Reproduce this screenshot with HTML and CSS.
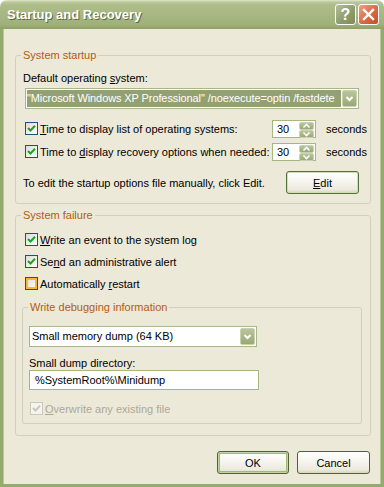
FILE: index.html
```html
<!DOCTYPE html>
<html lang="en">
<head>
  <meta charset="UTF-8" />
  <title>Startup and Recovery</title>
  <link rel="stylesheet" href="styles.css">
</head>
<body>
  <div class="window">
    <div class="titlebar">
      <span class="title">Startup and Recovery</span>
      <div class="caption-buttons">
        <span class="cap-btn help">?</span>
        <span class="cap-btn close">
          <svg width="19" height="19" viewBox="0 0 19 19"><path d="M5 5 L14 14 M14 5 L5 14" stroke="#fff" stroke-width="2.4" stroke-linecap="square"/></svg>
        </span>
      </div>
    </div>

    <div class="client">
      <fieldset class="group startup">
        <legend>System startup</legend>
        <div class="label">Default operating <u>s</u>ystem:</div>
        <div class="combo combo-os">
          <span class="combo-text selected">"Microsoft Windows XP Professional" /noexecute=optin /fastdete</span>
          <span class="drop-btn"><svg width="13" height="15" viewBox="0 0 13 15"><polyline points="3.5,6 6.5,9 9.5,6" fill="none" stroke="#fff" stroke-width="2"/></svg></span>
        </div>

        <div class="timers">
          <label class="check-label">
            <span class="check on"><svg width="9" height="9" viewBox="0 0 9 9"><path d="M1 4 L3.5 6.5 L8 1.8" fill="none" stroke="#21a121" stroke-width="2"/></svg></span>
            <span><u>T</u>ime to display list of operating systems:</span>
          </label>
          <span class="spin">
            <span class="spin-value">30</span>
            <span class="spin-btns">
              <span class="spin-btn"><svg width="13" height="6" viewBox="0 0 13 6"><polyline points="3.5,4.5 6.5,1.5 9.5,4.5" fill="none" stroke="#fff" stroke-width="1.6"/></svg></span>
              <span class="spin-btn"><svg width="13" height="6" viewBox="0 0 13 6"><polyline points="3.5,1.5 6.5,4.5 9.5,1.5" fill="none" stroke="#fff" stroke-width="1.6"/></svg></span>
            </span>
          </span>
          <span class="unit">seconds</span>

          <label class="check-label">
            <span class="check on"><svg width="9" height="9" viewBox="0 0 9 9"><path d="M1 4 L3.5 6.5 L8 1.8" fill="none" stroke="#21a121" stroke-width="2"/></svg></span>
            <span>Time to <u>d</u>isplay recovery options when needed:</span>
          </label>
          <span class="spin">
            <span class="spin-value">30</span>
            <span class="spin-btns">
              <span class="spin-btn"><svg width="13" height="6" viewBox="0 0 13 6"><polyline points="3.5,4.5 6.5,1.5 9.5,4.5" fill="none" stroke="#fff" stroke-width="1.6"/></svg></span>
              <span class="spin-btn"><svg width="13" height="6" viewBox="0 0 13 6"><polyline points="3.5,1.5 6.5,4.5 9.5,1.5" fill="none" stroke="#fff" stroke-width="1.6"/></svg></span>
            </span>
          </span>
          <span class="unit">seconds</span>
        </div>

        <div class="edit-row">
          <span>To edit the startup options file manually, click Edit.</span>
          <button class="btn btn-edit"><u>E</u>dit</button>
        </div>
      </fieldset>

      <fieldset class="group failure">
        <legend>System failure</legend>
        <label class="check-row first">
          <span class="check on"><svg width="9" height="9" viewBox="0 0 9 9"><path d="M1 4 L3.5 6.5 L8 1.8" fill="none" stroke="#21a121" stroke-width="2"/></svg></span>
          <span><u>W</u>rite an event to the system log</span>
        </label>
        <label class="check-row">
          <span class="check on"><svg width="9" height="9" viewBox="0 0 9 9"><path d="M1 4 L3.5 6.5 L8 1.8" fill="none" stroke="#21a121" stroke-width="2"/></svg></span>
          <span>Se<u>n</u>d an administrative alert</span>
        </label>
        <label class="check-row">
          <span class="check hot"></span>
          <span>Automatically <u>r</u>estart</span>
        </label>

        <fieldset class="group debug">
          <legend>Write debugging information</legend>
          <div class="combo combo-dump">
            <span class="combo-text">Small memory dump (64 KB)</span>
            <span class="drop-btn"><svg width="13" height="15" viewBox="0 0 13 15"><polyline points="3.5,6 6.5,9 9.5,6" fill="none" stroke="#fff" stroke-width="2"/></svg></span>
          </div>
          <div class="label dir-label">Small dump directory:</div>
          <div class="textbox">%SystemRoot%\Minidump</div>
          <label class="check-row disabled">
            <span class="check on"><svg width="9" height="9" viewBox="0 0 9 9"><path d="M1 4 L3.5 6.5 L8 1.8" fill="none" stroke="#cac8bb" stroke-width="2"/></svg></span>
            <span><u>O</u>verwrite any existing file</span>
          </label>
        </fieldset>
      </fieldset>

      <div class="dialog-buttons">
        <button class="btn btn-default">OK</button>
        <button class="btn btn-cancel">Cancel</button>
      </div>
    </div>
  </div>
</body>
</html>
```

FILE: styles.css
```css
:root {
  --face: #ece9d8;
  --group-line: #d0d0bf;
  --caption: #b45b12;
  --olive-sel: #93a070;
  --field-border: #a4b97f;
  --check-border: #1c5180;
  --frame: #94ab6e;
}

* {
  box-sizing: border-box;
}

html, body {
  margin: 0;
}

body {
  background: #fff;
  font-family: "Liberation Sans", Arial, sans-serif;
  font-size: 11px;
  color: #000;
}

u {
  text-decoration: underline;
  text-underline-offset: 1px;
}

.window {
  width: 384px;
  height: 487px;
  display: flex;
  flex-direction: column;
}

/* title bar */
.titlebar {
  height: 29px;
  flex: none;
  display: flex;
  align-items: center;
  justify-content: space-between;
  padding: 0 5px 0 7px;
  border-radius: 7px 7px 0 0;
  background: linear-gradient(to bottom, #dfe6c6 0, #bcc99c 2px, #adbc88 5px, #a8b783 50%, #a0b07a 85%, #8fa166 100%);
}

.title {
  color: #fff;
  font-weight: bold;
  font-size: 13px;
  text-shadow: 1px 1px 0 #5c6c3e;
}

.caption-buttons {
  display: flex;
  gap: 2px;
}

.cap-btn {
  width: 21px;
  height: 21px;
  border: 1px solid #fff;
  border-radius: 3px;
  display: flex;
  align-items: center;
  justify-content: center;
}

.help {
  background: linear-gradient(135deg, #b3bf97, #8c9a68 60%, #7e8d5a);
  color: #fff;
  font-weight: bold;
  font-size: 16px;
}

.close {
  background: linear-gradient(135deg, #eea283, #d76a41 55%, #c24d25);
}

/* client area */
.client {
  flex: 1;
  background: var(--face);
  border: solid var(--frame);
  border-width: 0 3px 3px;
  box-shadow: inset 1px 0 0 #b7c79a, inset -1px 0 0 #b7c79a;
  padding: 20px 10px 0 12px;
}

.group {
  margin: 0;
  min-width: 0;
  border: 1px solid var(--group-line);
  border-radius: 3px;
  padding: 0 11px 9px 7px;
}

.group legend {
  color: var(--caption);
  padding: 0 2px;
  margin-left: -2px;
  line-height: 13px;
}

.label {
  line-height: 13px;
  margin-top: 10px;
}

/* combo boxes */
.combo {
  display: flex;
  height: 21px;
  border: 1px solid #a7b68c;
  background: #fff;
  padding: 1px;
}

.combo-os {
  width: 334px;
  margin: 3px 0 0 2px;
}

.combo-text {
  flex: 1;
  overflow: hidden;
  white-space: nowrap;
  line-height: 17px;
}

.combo-text.selected {
  background: var(--olive-sel);
  color: #fff;
  margin-right: 1px;
  letter-spacing: -0.1px;
}

.drop-btn {
  width: 15px;
  flex: none;
  display: flex;
  align-items: center;
  justify-content: center;
  border: 1px solid #c8d2b0;
  border-radius: 2px;
  background: linear-gradient(to bottom, #b9c59c, #9aa874);
}

/* timers */
.timers {
  display: grid;
  grid-template-columns: 249px 44px auto;
  grid-auto-rows: 21px;
  row-gap: 2px;
  align-items: center;
  margin-top: 9px;
}

.check-label,
.check-row {
  display: flex;
  align-items: center;
  gap: 2px;
  padding-left: 2px;
  white-space: nowrap;
}

.check {
  width: 13px;
  height: 13px;
  flex: none;
  border: 1px solid var(--check-border);
  background: linear-gradient(135deg, #dcdcd7, #fff);
  display: flex;
  align-items: center;
  justify-content: center;
}

.check.hot {
  box-shadow: inset 0 0 0 2px #f8b636;
}

.spin {
  display: flex;
  height: 18px;
  border: 1px solid var(--field-border);
  background: #fff;
  padding: 1px;
}

.spin-value {
  flex: 1;
  padding-left: 3px;
  line-height: 14px;
}

.spin-btns {
  width: 15px;
  display: flex;
  flex-direction: column;
}

.spin-btn {
  flex: 1;
  display: flex;
  align-items: center;
  justify-content: center;
  border: 1px solid #c8d2b0;
  border-radius: 2px;
  background: linear-gradient(to bottom, #b9c59c, #9aa874);
}

.unit {
  padding-left: 10px;
}

.edit-row {
  display: flex;
  justify-content: space-between;
  align-items: center;
  margin-top: 9px;
}

/* buttons */
.btn {
  height: 23px;
  width: 73px;
  padding: 0;
  font: inherit;
  color: #000;
  border: 1px solid #4f6135;
  border-radius: 3px;
  background: linear-gradient(to bottom, #fff 0, #f7f6f1 40%, #ece9dd 85%, #d8d3c4 100%);
}

.btn-edit {
  border-color: #566f38;
  box-shadow: inset 0 0 0 1px #d2dcb6;
}

.btn-default {
  width: 72px;
  box-shadow: inset 0 0 0 1px #c4d3a0, inset 0 0 0 2px #a3b978;
}

/* system failure */
.failure {
  margin-top: 5px;
  padding: 0 8px 11px 7px;
}

.check-row {
  height: 17px;
  margin-top: 5px;
}

.check-row.first {
  margin-top: 9px;
}

.debug {
  margin: 9px 0 0 -1px;
  padding: 0 6px 6px 6px;
}

.debug legend {
  margin-left: -1px;
}

.combo-dump {
  width: 228px;
  margin-top: 12px;
}

.combo-dump .combo-text {
  padding-left: 1px;
}

.dir-label {
  margin-top: 10px;
}

.textbox {
  width: 230px;
  height: 20px;
  border: 1px solid var(--field-border);
  background: #fff;
  padding-left: 5px;
  line-height: 18px;
}

.check-row.disabled {
  margin-top: 10px;
  padding-left: 1px;
  color: #aca899;
}

.check-row.disabled .check {
  border-color: #cac8bb;
  background: #f4f3ee;
}

.dialog-buttons {
  display: flex;
  justify-content: flex-end;
  gap: 8px;
  margin-top: 15px;
  padding-right: 1px;
}
```
